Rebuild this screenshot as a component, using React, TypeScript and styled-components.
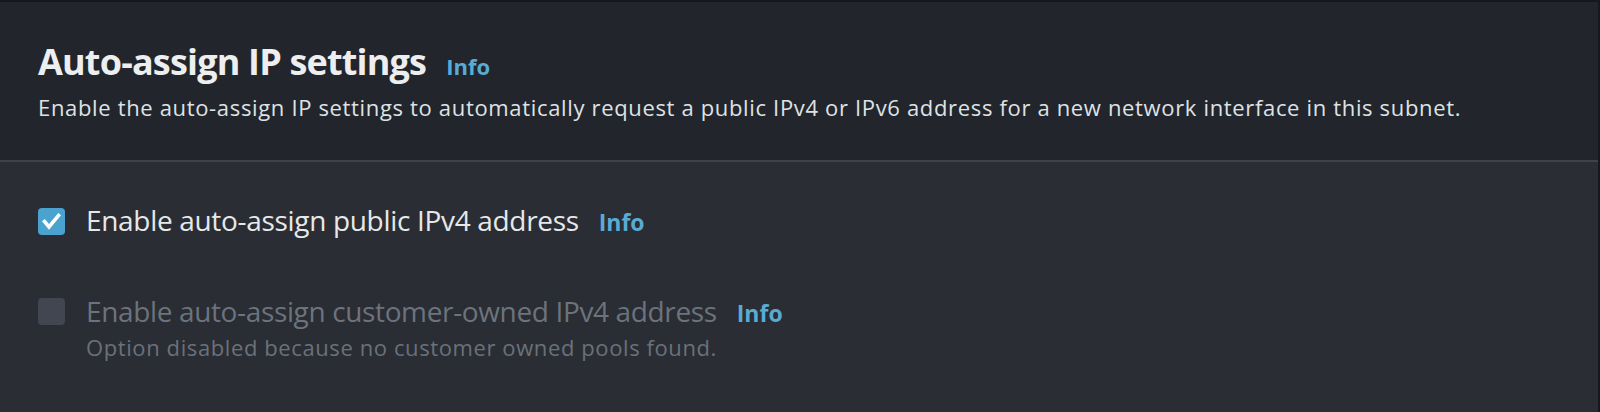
import React from "react";
import styled, { createGlobalStyle } from "styled-components";

const Global = createGlobalStyle`
  html, body { margin: 0; padding: 0; background: #16181d; }
  body { font-family: "Open Sans", "Noto Sans", sans-serif; -webkit-font-smoothing: antialiased; }
  #root { width: 1600px; height: 412px; }
`;

const Panel = styled.section`
  box-sizing: border-box;
  margin: 2px 2px 0 0;
  width: 1598px;
  height: 410px;
  background: #2a2d33;
  display: flex;
  flex-direction: column;
`;

const Header = styled.header`
  box-sizing: border-box;
  height: 160px;
  padding: 38px 38px 0 38px;
  background: #22252b;
  border-bottom: 2px solid #3e434b;
`;

const TitleRow = styled.div`
  display: flex;
  align-items: baseline;
  gap: 20px;
`;

const Title = styled.h2`
  margin: 0;
  font-size: 36px;
  line-height: 44px;
  font-weight: 700;
  color: #eceeef;
  letter-spacing: -0.82px;
`;

const InfoLink = styled.a<{ $size: number }>`
  font-size: ${(p) => p.$size}px;
  font-weight: 700;
  color: #58acd4;
  text-decoration: none;
  letter-spacing: 0px;
`;

const Description = styled.p`
  margin: 8px 0 0 0;
  font-size: 22px;
  line-height: 30px;
  color: #dfe2e5;
  letter-spacing: 0.66px;
`;

const Body = styled.div`
  box-sizing: border-box;
  padding: 40px 38px 0 38px;
  display: flex;
  flex-direction: column;
  gap: 55px;
`;

const OptionRow = styled.label`
  display: flex;
  align-items: flex-start;
  gap: 21px;
`;

const Box = styled.span<{ $checked?: boolean; $disabled?: boolean }>`
  box-sizing: border-box;
  flex: 0 0 27px;
  width: 27px;
  height: 27px;
  margin-top: ${(p) => (p.$disabled ? 5 : 6)}px;
  border-radius: 4px;
  background: ${(p) => (p.$disabled ? "#414650" : p.$checked ? "#4aa3ce" : "transparent")};
  display: flex;
  align-items: center;
  justify-content: center;
`;

const TextCol = styled.div`
  display: flex;
  flex-direction: column;
`;

const LabelLine = styled.div`
  display: flex;
  align-items: baseline;
  gap: 20px;
`;

const LabelText = styled.span<{ $disabled?: boolean }>`
  font-size: 28px;
  line-height: 36px;
  color: ${(p) => (p.$disabled ? "#6c737d" : "#e6e8ea")};
  letter-spacing: ${(p) => (p.$disabled ? "-0.36px" : "-0.32px")};
`;

const HelpText = styled.span`
  margin-top: 3px;
  font-size: 22px;
  line-height: 30px;
  color: #6a717b;
  letter-spacing: 0.6px;
`;

const Check = () => (
  <svg width="27" height="27" viewBox="0 0 27 27">
    <path d="M6.5 13.5 L11 19 L20.5 7.5" fill="none" stroke="#fff" strokeWidth="3.6" strokeLinecap="square" strokeLinejoin="miter" />
  </svg>
);

export default function App() {
  return (
    <>
      <Global />
      <Panel>
        <Header>
          <TitleRow>
            <Title>Auto-assign IP settings</Title>
            <InfoLink $size={22}>Info</InfoLink>
          </TitleRow>
          <Description>
            Enable the auto-assign IP settings to automatically request a public IPv4 or IPv6 address for a new network interface in this subnet.
          </Description>
        </Header>
        <Body>
          <OptionRow>
            <Box $checked>
              <Check />
            </Box>
            <TextCol>
              <LabelLine>
                <LabelText>Enable auto-assign public IPv4 address</LabelText>
                <InfoLink $size={23}>Info</InfoLink>
              </LabelLine>
            </TextCol>
          </OptionRow>
          <OptionRow>
            <Box $disabled />
            <TextCol>
              <LabelLine>
                <LabelText $disabled>Enable auto-assign customer-owned IPv4 address</LabelText>
                <InfoLink $size={23}>Info</InfoLink>
              </LabelLine>
              <HelpText>Option disabled because no customer owned pools found.</HelpText>
            </TextCol>
          </OptionRow>
        </Body>
      </Panel>
    </>
  );
}
